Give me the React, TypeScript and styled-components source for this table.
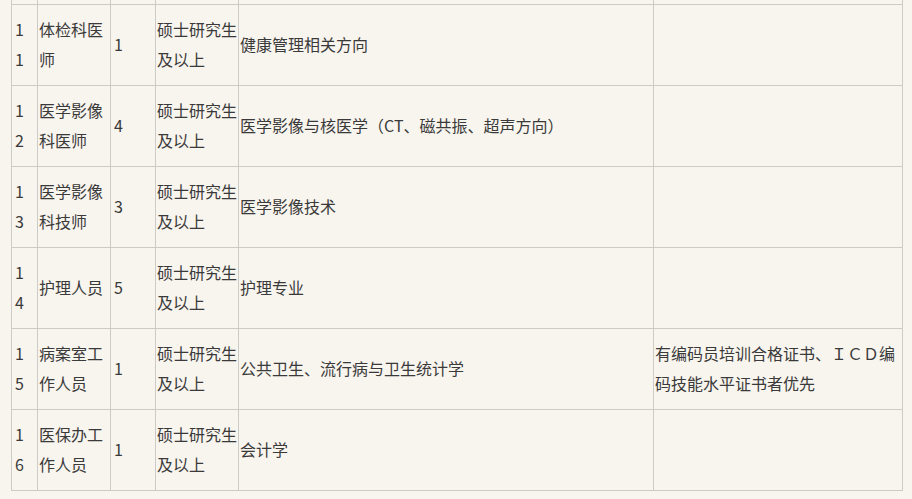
import styled, { createGlobalStyle } from "styled-components";

const GlobalStyle = createGlobalStyle`
    html, body { margin: 0; padding: 0; background: #f8f4ee; }
`;

type Row = { no: string; post: string; count: string; edu: string; major: string; note?: string };

const rows: Row[] = [
    { no: "11", post: "体检科医师", count: "1", edu: "硕士研究生及以上", major: "健康管理相关方向" },
    { no: "12", post: "医学影像科医师", count: "4", edu: "硕士研究生及以上", major: "医学影像与核医学（CT、磁共振、超声方向）" },
    { no: "13", post: "医学影像科技师", count: "3", edu: "硕士研究生及以上", major: "医学影像技术" },
    { no: "14", post: "护理人员", count: "5", edu: "硕士研究生及以上", major: "护理专业" },
    { no: "15", post: "病案室工作人员", count: "1", edu: "硕士研究生及以上", major: "公共卫生、流行病与卫生统计学", note: "有编码员培训合格证书、ＩＣＤ编码技能水平证书者优先" },
    { no: "16", post: "医保办工作人员", count: "1", edu: "硕士研究生及以上", major: "会计学" },
];

const widths = [26, 73, 45, 83, 415, 249];

export default function App() {
    return (
        <Page>
            <GlobalStyle />
            <Table>
                <colgroup>
                    {widths.map((w, i) => <col key={i} style={{ width: w }} />)}
                </colgroup>
                <tbody>
                    {/* tail of the previous row, cut off by the viewport */}
                    <CutRow>
                        {widths.map((_, i) => <Cell key={i} />)}
                    </CutRow>
                    {rows.map(r => (
                        <tr key={r.no}>
                            <NoCell>{r.no}</NoCell>
                            <Cell>{r.post}</Cell>
                            <CountCell>{r.count}</CountCell>
                            <Cell>{r.edu}</Cell>
                            <Cell>{r.major}</Cell>
                            <Cell>{r.note}</Cell>
                        </tr>
                    ))}
                </tbody>
            </Table>
        </Page>
    )
}

const Page = styled.div`
    width: 912px;
    height: 499px;
    overflow: hidden;
    padding-left: 11px;
    box-sizing: border-box;
    background: #f8f4ee;
`;

const Table = styled.table`
    border-collapse: collapse;
    table-layout: fixed;
    width: 892px;
    font-family: "Noto Sans CJK SC", "Noto Sans", sans-serif;
    font-size: 16px;
    line-height: 30px;
    color: #3a3a3a;
`;

const Cell = styled.td`
    border: 1px solid #cccbc8;
    padding: 9px 1px 11px;
    vertical-align: middle;
    word-break: break-all;
    height: 60px;
`;

const NoCell = styled(Cell)`
    padding: 9px 8px 11px 3px;
`;

const CountCell = styled(Cell)`
    padding-left: 3px;
`;

const CutRow = styled.tr`
    & > td {
        height: 4px;
        padding: 0;
        border-top: none;
    }
`;
